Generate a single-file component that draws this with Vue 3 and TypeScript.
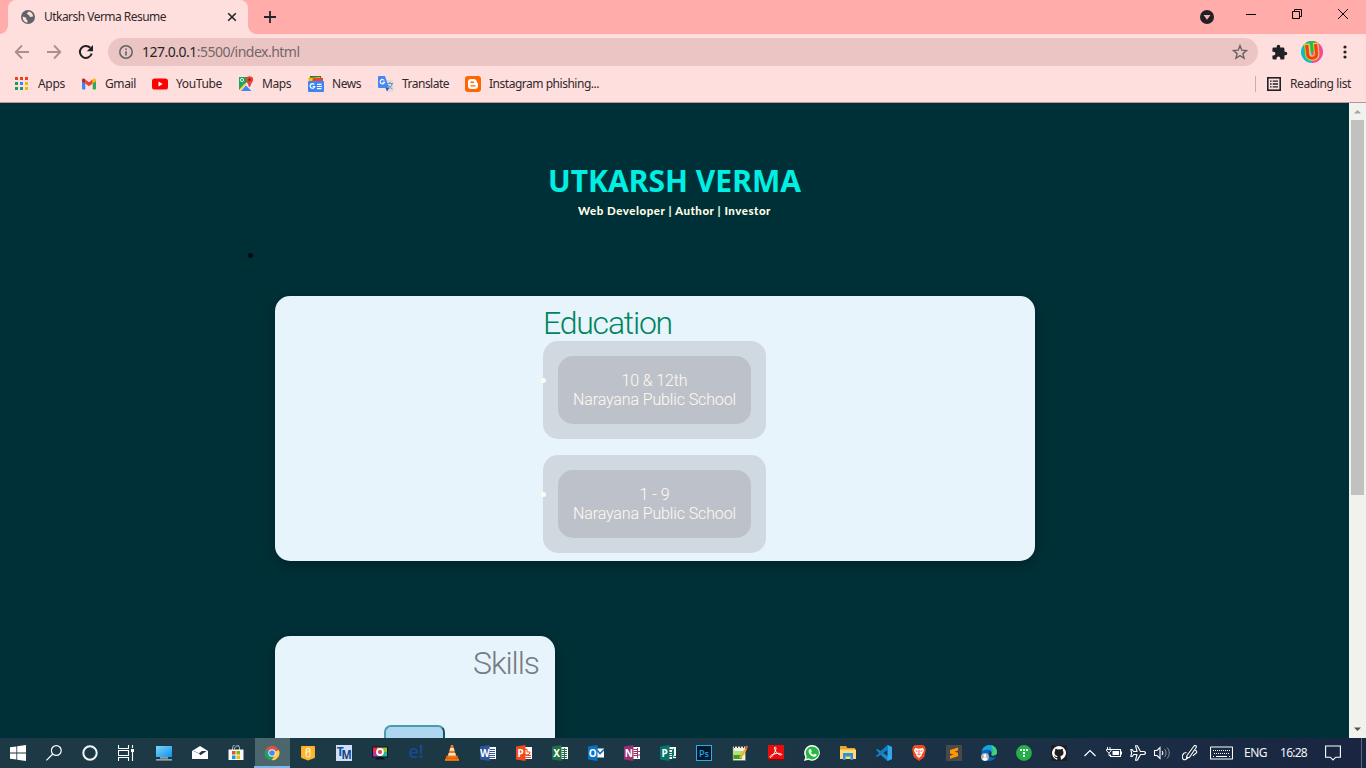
<script setup lang="ts">
interface Item { name: string; w?: number; svg: string }

/* Spreads letter spacing so that a label takes a given width. */
const vFit = {
  mounted(el: HTMLElement, binding: { value: number }) {
    const range = document.createRange()
    range.selectNodeContents(el)
    const natural = range.getBoundingClientRect().width
    const count = (el.textContent || '').length
    el.style.letterSpacing = (binding.value - natural) / count + 'px'
  },
}

const bookmarks: Item[] = [
  { name: 'Apps', w: 27, svg: '<g transform="translate(2 1)"><path fill="#ea4318" d="M0 0h3v3H0zM5 0h3v3H5zM10 0h3v3h-3z"/><path fill="#12a05c" d="M0 5h3v3H0zM0 10h3v3H0z"/><path fill="#2f86f6" d="M5 5h3v3H5z"/><path fill="#f5b400" d="M10 5h3v3h-3zM10 10h3v3h-3z"/><path fill="#12a05c" d="M5 10h3v3H5z"/></g>' },
  { name: 'Gmail', w: 31, svg: '<path fill="#4285f4" d="M1 4.5l3.3 2.4v6.6H2a1 1 0 0 1-1-1z"/><path fill="#34a853" d="M11.7 6.9L15 4.5v8a1 1 0 0 1-1 1h-2.300z"/><path fill="#ea4335" d="M4.300 3.500L8 6.300l3.700-2.800v4L8 10.300 4.300 7.500z"/><path fill="#c5221f" d="M1 4c0-1.500 1.500-2 2.500-1.200l.8.7v4L1 5.200z"/><path fill="#fbbc04" d="M15 4c0-1.500-1.500-2-2.500-1.200l-.8.7v4L15 5.200z"/>' },
  { name: 'YouTube', w: 46, svg: '<rect x="0" y="2.500" width="16" height="11" rx="2.600" fill="#f00"/><path fill="#fff" d="M6.500 5.500v5L10.700 8z"/>' },
  { name: 'Maps', w: 29, svg: '<path fill="#1da462" d="M1 1h10v5L2 14H1z"/><path fill="#e8eaed" d="M2 13l8-8 5 4v5h-2L8 9l-5 5.500z"/><path fill="#4285f4" d="M8 9.500l5.500 5.500H3z"/><path fill="#fbcd34" d="M6.500 7.500l1.500 1.500-5.500 5.500L1 14z"/><circle cx="4" cy="4" r="1.600" fill="none" stroke="#dff3e5"/><path fill="#ea4335" d="M11.500.2c4.500 0 4.500 4.500 2 7L12 11h-1L9.600 7.200C7 4.500 7.500.2 11.500.2z"/><circle cx="11.500" cy="3.800" r="1.300" fill="#8a2018"/>' },
  { name: 'News', w: 29, svg: '<path fill="#188038" d="M2 0h11l1 6H1z"/><path fill="#fbbc04" d="M0 2l12-1 2 5H1z"/><path fill="#ea4335" d="M5 2l10 0v4H4z"/><rect y="5" width="16" height="11" rx="1" fill="#3f84f5"/><path d="M6.300 8.600A2.300 2.300 0 1 0 6.700 10.500H4.600M9 8.300h4.500M9 10.500h5M9 12.700h4.500" fill="none" stroke="#fff" stroke-width="1.200"/>' },
  { name: 'Translate', w: 47, svg: '<path fill="#d9dde0" d="M6 4h9.500v11.800H9z"/><path d="M9.500 7.500h5.500M12 6v1.500M14 8c-.5 2.500-2 4-4 5M10.500 9c1 2 2 3 4 4" stroke="#7b9198" fill="none"/><path fill="#4a86f0" d="M1 0h6l4 12H1a1 1 0 0 1-1-1V1a1 1 0 0 1 1-1z"/><path fill="#3551c1" d="M7.500 12H11l-2 3.500z"/><path d="M6.300 4.500A2.200 2.200 0 1 0 6.500 6.300H4.500" fill="none" stroke="#fff" stroke-width="1.100"/>' },
  { name: 'Instagram phishing...', w: 110, svg: '<rect width="16" height="16" rx="3" fill="#ff6600"/><path fill="#fff" d="M6 3h2.500C10.500 3 12 4.500 12 6.500c.2.700 1 .3 1 1.200V10a3 3 0 0 1-3 3H6a3 3 0 0 1-3-3V6a3 3 0 0 1 3-3z"/><path d="M6 6.300h2.500M6 9.900h4" stroke="#ff6600" stroke-width="1.400" stroke-linecap="round"/>' },
]

const office = (color: string, letter: string, page: string) =>
  `<path fill="#fff" d="M8 2h8v12H8z"/>${page}<path fill="${color}" d="M0 1.600L9.500 0v16L0 14.400z"/><text x="4.700" y="11.600" text-anchor="middle" font-size="10" font-weight="700" font-family="Noto Sans" fill="#fff">${letter}</text>`

const shell: Item[] = [
  { name: 'start', svg: '<path fill="#fff" d="M0 2.300L6.400 1.400v6.200H0zM7.200 1.300L16 0v7.600H7.200zM0 8.400h6.400v6.200L0 13.700zM7.200 8.400H16V16l-8.800-1.300z"/>' },
  { name: 'search', svg: '<g fill="none" stroke="#fff" stroke-width="1.200"><circle cx="10.300" cy="5.500" r="4.900"/><path d="M6.800 9L.4 15.400"/></g>' },
  { name: 'cortana', svg: '<circle cx="8" cy="8" r="6.700" fill="none" stroke="#f4f6f6" stroke-width="2"/>' },
  { name: 'task view', svg: '<path d="M.5 0v3.500h10V0M.5 16v-3.500h10V16M.5 5.500h10v5H.5zM14.500 0v3M14.500 7v9" fill="none" stroke="#fff" stroke-width="1.100"/><path fill="#fff" d="M13 4h3v3h-3z"/>' },
]

const apps: Item[] = [
  { name: 'this pc', svg: '<defs><linearGradient id="pc" x2="1" y2="1"><stop stop-color="#7bd4ff"/><stop offset="1" stop-color="#1291e6"/></linearGradient></defs><rect x="0" y="1" width="16" height="11" fill="url(#pc)"/><path stroke="#b9c4c9" d="M4 12.800h8M0 14.800h16" stroke-width="1.200"/>' },
  { name: 'mail', svg: '<path fill="#fff" d="M0 6l8-5 8 5v8H0z"/><path fill="#1c3744" d="M1.500 6h13L8.500 10.300 7 8.500z"/><path fill="#fff" d="M1 5.500h9.500L7 8.300z"/>' },
  { name: 'store', svg: '<path d="M4.500 5V3a3.500 3.500 0 0 1 7 0v2M6.500 4.500V3a3.500 3.500 0 0 1 4-2" fill="none" stroke="#a7b3b8"/><path fill="#f8f8f8" d="M.5 4.500h15V15H.5z"/><path fill="#f25022" d="M4 6h3.500v3.500H4z"/><path fill="#7fba00" d="M8.500 6H12v3.500H8.500z"/><path fill="#00a4ef" d="M4 10.500h3.500V14H4z"/><path fill="#ffb900" d="M8.500 10.500H12V14H8.500z"/>' },
  { name: 'chrome', svg: '<circle cx="8" cy="8" r="7.200" fill="#dd5144"/><path fill="#ffcd46" d="M8 8l6.800-3A7.200 7.200 0 0 1 7.500 15.200L11 9z"/><path fill="#1ca261" d="M8 8L1.700 4.400A7.200 7.200 0 0 0 7.400 15.200L11 10z"/><circle cx="8" cy="8" r="3.700" fill="#f1f3f4"/><circle cx="8" cy="8" r="2.800" fill="#4688f4"/>' },
  { name: 'gold', svg: '<rect x="1" y="1" width="14" height="12" rx="1" fill="#f59c12"/><path fill="#ffb52b" d="M1.500 1h13v12L8 15.500 1.500 13z"/><path d="M9.800 4.700L6.200 8.300V5A1.500 1.500 0 0 1 8 3.500h.5A1.600 1.600 0 0 1 10 5v5a2 2 0 0 1-4 0V8.300" fill="none" stroke="#fff1c8" stroke-width="1.200"/>' },
  { name: 'tm', svg: '<rect width="16" height="16" fill="#cfe0fa"/><text x=".8" y="11" font-size="12" font-weight="700" font-family="Noto Sans" fill="#0d5597" textLength="7" lengthAdjust="spacingAndGlyphs">T</text><text x="5.500" y="13.500" font-size="11.500" font-weight="700" font-family="Noto Sans" fill="#173f85" textLength="10.200" lengthAdjust="spacingAndGlyphs">M</text>' },
  { name: 'recorder', svg: '<path fill="#101418" d="M0 1.500h16v11h-5l2 2H3l2-2H0z"/><path fill="#e52b54" d="M1 2.500h5V7H1z"/><path fill="#ea8b20" d="M5 2.500h4V7H5z"/><path fill="#8bc33b" d="M9 2.500h6V7H9z"/><path fill="#b136a5" d="M1 7h5v4.500H1z"/><path fill="#3273cf" d="M5 7h5v4.500H5z"/><path fill="#21b59a" d="M10 7h5v4.500h-5z"/><circle cx="8" cy="7" r="3.900" fill="#fff"/><circle cx="8" cy="7" r="2.100" fill="#e63f4a"/>' },
  { name: 'e', svg: '<text x=".5" y="13" font-size="18" font-family="Noto Sans" font-weight="500" fill="#154c97" textLength="15" lengthAdjust="spacingAndGlyphs">e!</text>' },
  { name: 'vlc', svg: '<path fill="#e85e00" d="M2.500 10.500h11L15 15.500H1z"/><path fill="#f47b0c" d="M7 0h2l3.500 12.500h-9z"/><path fill="#f4e9df" d="M6.300 3h3.400l.8 2.700h-5zM4.800 8h6.400l.7 2.500H4.100z"/><path fill="#f47b0c" d="M1 14h14v1.800H1z"/>' },
  { name: 'word', svg: office('#2b579a', 'W', '<path stroke="#2b579a" d="M9 4.500h6M9 6.500h6M9 8.500h6M9 10.500h6M9 12.500h6"/>') },
  { name: 'powerpoint', svg: office('#f24a20', 'P', '<path fill="none" stroke="#f24a20" d="M9.500 10.500H15M9.500 12.500H15M11 4v3h3a3 3 0 1 1-3-3"/>') },
  { name: 'excel', svg: office('#1e7145', 'X', '<path stroke="#1e7145" d="M9.500 4.500H15M9.500 6.500H15M9.500 8.500H15M9.500 10.500H15M9.500 12.500H15M12.500 3v11"/>') },
  { name: 'outlook', svg: '<path fill="#fff" d="M8 3.500h8v9H8z"/><path d="M9 5l3 3.500L16 4.500" stroke="#0872c6" stroke-width="1.600" fill="none"/><path fill="#0872c6" d="M0 1.600L9.500 0v16L0 14.400z"/><text x="4.700" y="11.600" text-anchor="middle" font-size="10" font-weight="700" font-family="Noto Sans" fill="#fff">O</text>' },
  { name: 'onenote', svg: office('#9b3070', 'N', '<path fill="none" stroke="#9b3070" d="M9.500 4.500H13M9.500 6.500H13M9.500 8.500H13M9.500 10.500H13M13.500 3v10M14 6.500h2M14 10h2"/>') },
  { name: 'publisher', svg: office('#077568', 'P', '<path fill="none" stroke="#077568" d="M9 4.500h3.500V14M13.500 3.500v7M9 7.500h3M9 9.500h3M9 11.500h3M13.500 11.500H16M13 13.500h3"/>') },
  { name: 'photoshop', svg: '<rect x=".5" y=".5" width="15" height="15" fill="#06182c" stroke="#27afec"/><text x="3" y="11.500" font-size="9.500" font-family="Noto Sans" font-weight="500" fill="#25a9ea" textLength="10" lengthAdjust="spacingAndGlyphs">Ps</text>' },
  { name: 'notepad', svg: '<path fill="#eef2e7" stroke="#6f786b" stroke-width=".7" d="M1 1.500h12.500v14H1z"/><path fill="#b5e06b" d="M1.500 6h11v4l-10 3z"/><path fill="#3f9e23" d="M1.500 10h9l-1 4h-8z"/><path stroke="#303b35" d="M2.500 0v3M5.500 0v3M8.500 0v3M11.500 0v3"/><path d="M8 13l6.300-9.500" stroke="#f0b11e" stroke-width="2.200"/><path d="M13.700 4L15.300 1" stroke="#e55734" stroke-width="2.200"/>' },
  { name: 'acrobat', svg: '<rect width="16" height="15" fill="#e90c0c"/><path fill="#850909" d="M0 14h16v1.500H0z"/><path fill="none" stroke="#fff" stroke-width="1" d="M7 2c2 0 1 5-3.800 10.200-1.200.8-2.200-.5.500-2.200C8 7.700 13.700 8 13.700 9.500 13.500 11.500 6.500 8 6.500 2.600 6.500 2 7 2 7 2"/>' },
  { name: 'whatsapp', svg: '<path fill="#fff" d="M8.200 0A7.800 7.800 0 1 1 4.400 14.700L0 16l1.300-4.100A7.900 7.900 0 0 1 8.200 0z"/><path fill="#25b943" d="M8.200 1.400a6.500 6.500 0 1 1-3.600 11.800L2 14l.8-2.500A6.500 6.500 0 0 1 8.200 1.400z"/><path fill="#fff" d="M5.500 4.300L6.800 4l1 2.300-.9 1.200c.7 1.200 1.500 1.900 2.700 2.300l1.100-1.100 2 1.100c0 1.300-1.300 2-2.500 1.900C6.800 11 4.500 8.200 4.600 6.200c0-.8.3-1.500.9-1.900z"/>' },
  { name: 'explorer', svg: '<path fill="#e9a626" d="M0 1h6l1.500 2H15v3H0z"/><path fill="#ffda70" d="M0 4.500h16V14H0z"/><path fill="#2c93dc" d="M3 8h10v7h-2.500v-3.500h-5V15H3z"/>' },
]

const appsNarrow: Item[] = [
  { name: 'vscode', svg: '<path fill="#168bd2" d="M11.500 0L16 2v12l-4.500 2-7-6.300L1.500 12 0 11.200 3.200 8 0 4.800 1.500 4l3 2.300zM12 4.500L7.200 8l4.800 3.500z"/><path fill="#30a7ef" d="M11.500 0L16 2v12l-4.500 2z"/><path fill="#0877b6" d="M0 11.200L12 0v4.500L1.500 12z" opacity=".6"/>' },
  { name: 'brave', svg: '<path fill="#f4481e" d="M4 0h8l2 1.500.8 3L13.300 12 8 16l-5.300-4L1.200 4.500l.8-3z"/><path fill="#fff" d="M4 3l4 .8L12 3l1 2.500-1.500 3-1 .8.5 1L8 13l-3-2.700.5-1-1-.8L3 5.500z"/><path stroke="#f4481e" stroke-width=".9" fill="none" d="M4.500 5.700l2 .7M11.500 5.700l-2 .7M8 5v4M6.300 9l1.700 1.100L9.700 9"/>' },
  { name: 'sublime', svg: '<rect width="16" height="16" fill="#48494a"/><path fill="#ff9800" d="M4 5l8-2.500v3L8.500 6.700 12 7.800v3.400L4 13.800v-3l3.500-1.200L4 8.400z"/>' },
  { name: 'edge', svg: '<path fill="#12a5e0" d="M.5 7C1.500 2 5 0 8.500 0 13 0 16 3.500 16 7.200c0 3-3.300 4-5.700 2.700.8-1.500.5-4.500-3-5C4 4.500 1.500 6 .5 7z"/><path fill="#40d07a" d="M10 .2c4 .5 6 4 6 7 0 3-3.500 4-5.700 2.700L12 5z"/><path fill="#0867bd" d="M.5 7.500c2-4 8-3.500 8.500 0-2.500 1-1.500 5 2.500 5 1.500 0 2.700-.4 3.500-1-1.500 3.500-5 4.800-8.200 4.400C2.500 15.300 0 11.500.5 7.500z"/><circle cx="4" cy="12" r="4" fill="#aeb4b8"/><circle cx="4" cy="10.700" r="1.400" fill="#fff"/><path fill="#fff" d="M1.500 14.500c0-3 5-3 5 0L4 16z"/>' },
  { name: 'green', svg: '<circle cx="8" cy="8" r="7.900" fill="#25af49"/><path fill="#fff" d="M4 4h2v2H4zM7 4h2v2H7zM10 4h2v2h-2zM7 7h2v2H7zM7 10h2v2H7z"/>' },
  { name: 'github', svg: '<rect width="16" height="16" fill="#201d21"/><path fill="#fff" fill-rule="evenodd" d="M8 1a7 7 0 0 0-2.200 13.650c.35.060.48-.15.480-.340v-1.200c-1.950.420-2.360-.940-2.360-.940-.320-.810-.780-1.030-.780-1.030-.640-.440.050-.430.050-.430.700.050 1.070.720 1.070.720.620 1.070 1.640.760 2.040.580.060-.450.240-.760.440-.930-1.550-.180-3.190-.780-3.190-3.460 0-.770.270-1.390.720-1.880-.070-.180-.310-.890.070-1.850 0 0 .590-.190 1.930.720a6.700 6.700 0 0 1 3.510 0c1.340-.910 1.930-.720 1.930-.720.380.960.140 1.670.070 1.850.450.490.720 1.110.720 1.880 0 2.690-1.640 3.280-3.200 3.450.250.220.480.650.480 1.300v1.930c0 .190.130.410.480.340A7 7 0 0 0 8 1z"/>' },
]
</script>

<template>
  <div class="screen">
    <header class="tabs">
      <div class="tab">
        <svg class="globe" viewBox="0 0 16 16"><circle cx="8" cy="8" r="7" fill="#5f6368" /><path fill="#ffdfde" d="M2.700 7.600c1.500.9 3 .4 3.500 1.600.3 1-.1 1.700 1.200 1.900v2.600C4.500 13.500 2.300 11 2.700 7.600zM8.500 2.500c-.2 1.300-1.700 1-1.700 2.300 0 1.100 1.200.8 2 1.300.9.600.5 1.800 1.700 1.900 1 .1 1.300-.9 2.700-.4C13 4.800 11 2.700 8.500 2.500z" /></svg>
        <span v-fit="122" class="ui">Utkarsh Verma Resume</span>
        <svg class="close" viewBox="0 0 10 10"><path d="M1.200 1.200l7.600 7.600M8.800 1.200L1.200 8.800" stroke="#222529" stroke-width="1.600" /></svg>
      </div>
      <svg class="plus" viewBox="0 0 12 12"><path d="M6 0v12M0 6h12" stroke="#222529" stroke-width="1.800" /></svg>
      <div class="window-controls">
        <svg class="drop" viewBox="0 0 14 14"><circle cx="7" cy="7" r="7" fill="#202124" /><path fill="#ffacab" d="M3.500 5h7L7 9.800z" /></svg>
        <svg viewBox="0 0 10 10"><path d="M0 5.500h10" stroke="#000" /></svg>
        <svg viewBox="0 0 10 10"><path d="M.5 2.500h7v7h-7zM2.500 2.500v-2h7v7h-2" stroke="#000" fill="none" /></svg>
        <svg viewBox="0 0 10 10"><path d="M0 0l10 10M10 0L0 10" stroke="#000" /></svg>
      </div>
    </header>

    <div class="toolbar">
      <svg class="nav" viewBox="0 0 16 16"><path d="M15 8H2M8 1.500L1.700 8 8 14.500" fill="none" stroke="#a98f91" stroke-width="1.800" /></svg>
      <svg class="nav" viewBox="0 0 16 16"><path d="M1 8h13M8 1.500L14.300 8 8 14.500" fill="none" stroke="#a98f91" stroke-width="1.800" /></svg>
      <svg class="nav" viewBox="0 0 16 16"><path d="M13.700 9.500A6 6 0 1 1 12.300 3.800" fill="none" stroke="#202124" stroke-width="2" /><path fill="#202124" d="M15 1v6.200H8.800z" /></svg>
      <div class="address">
        <svg viewBox="0 0 14 14"><circle cx="7" cy="7" r="6.200" fill="none" stroke="#5f6368" stroke-width="1.500" /><path stroke="#5f6368" stroke-width="1.600" d="M7 6.200v4.300M7 3.500v1.500" /></svg>
        <span v-fit="157.500" class="url">127.0.0.1<i>:5500/index.html</i></span>
        <svg class="star" viewBox="0 0 16 16"><path d="M8 1.700l1.800 4.500 4.800.3-3.700 3.100 1.200 4.700L8 11.700l-4.100 2.600 1.200-4.700L1.400 6.500l4.800-.3z" fill="none" stroke="#6a6164" stroke-width="1.400" /></svg>
      </div>
      <svg class="puzzle" viewBox="0 0 24 24"><path fill="#202124" d="M20.500 11H19V7a2 2 0 0 0-2-2h-4V3.500a2.500 2.500 0 0 0-5 0V5H4a2 2 0 0 0-2 2v3.800h1.500a2.700 2.700 0 0 1 0 5.400H2V20a2 2 0 0 0 2 2h3.800v-1.500a2.700 2.700 0 0 1 5.400 0V22H17a2 2 0 0 0 2-2v-4h1.500a2.500 2.500 0 0 0 0-5z" /></svg>
      <svg class="avatar" viewBox="0 0 22 22">
        <defs><clipPath id="disc"><circle cx="11" cy="11" r="11" /></clipPath></defs>
        <g clip-path="url(#disc)"><path fill="#05bfd0" d="M0 0h11v22H0z" /><path fill="#f3489c" d="M11 0h11v22H11z" /><path fill="#21b764" d="M5 0h10l2 11H7z" /></g>
        <g transform="rotate(-6 11 11)" class="initial" text-anchor="middle" font-size="20"><text x="11" y="18" fill="#ead52a" stroke="#ead52a" stroke-width="3">U</text><text x="11" y="18" fill="#ef3d22" stroke="#ef3d22" stroke-width=".6" aria-hidden="true">U</text></g>
      </svg>
      <svg class="dots" viewBox="0 0 4 14"><g fill="#202124"><circle cx="2" cy="2" r="1.600" /><circle cx="2" cy="7" r="1.600" /><circle cx="2" cy="12" r="1.600" /></g></svg>
    </div>

    <nav class="bookmarks">
      <a v-for="b in bookmarks" :key="b.name" class="bookmark">
        <svg viewBox="0 0 16 16" v-html="b.svg"></svg><span v-fit="b.w!" class="ui" :style="{ width: b.w + 'px' }">{{ b.name }}</span>
      </a>
      <div class="reading">
        <svg viewBox="0 0 14 14"><rect x=".8" y=".8" width="12.400" height="12.400" fill="none" stroke="#202124" stroke-width="1.600" /><path stroke="#202124" stroke-width="1.300" d="M3 4.200h1.600M5.700 4.200H11M3 7h1.600M5.700 7H11M3 9.800h1.600M5.700 9.800H11" /></svg>
        <span v-fit="61" class="ui">Reading list</span>
      </div>
    </nav>

    <main class="viewport">
      <div class="page">
        <h1><span v-fit="253">UTKARSH VERMA</span></h1>
        <p class="roles"><span v-fit="193">Web Developer | Author | Investor</span></p>
        <div class="bullet"></div>
        <section class="card education">
          <div class="stack">
            <h2><span v-fit="129">Education</span></h2>
            <div class="entry"><div class="inner"><span v-fit="66">10 &amp; 12th</span><span v-fit="163">Narayana Public School</span></div></div>
            <div class="entry"><div class="inner"><span v-fit="30">1 - 9</span><span v-fit="163">Narayana Public School</span></div></div>
          </div>
        </section>
        <section class="card skills">
          <h2><span v-fit="66">Skills</span></h2>
          <div class="chip"></div>
        </section>
      </div>
      <div class="scrollbar">
        <svg viewBox="0 0 17 17"><path fill="#a3a3a3" d="M5 10.500h7L8.500 7z" /></svg>
        <div class="thumb"></div>
        <svg class="down" viewBox="0 0 17 17"><path fill="#505050" d="M5 6.500h7L8.500 10z" /></svg>
      </div>
    </main>

    <footer class="taskbar">
      <div v-for="s in shell" :key="s.name" class="cell"><svg viewBox="0 0 16 16" v-html="s.svg"></svg></div>
      <div class="gap"></div>
      <div v-for="s in apps" :key="s.name" class="cell" :class="{ active: s.name === 'chrome' }"><svg viewBox="0 0 16 16" v-html="s.svg"></svg></div>
      <div v-for="s in appsNarrow" :key="s.name" class="cell narrow"><svg viewBox="0 0 16 16" v-html="s.svg"></svg></div>
      <div class="tray">
        <svg class="chev" viewBox="0 0 12 8"><path d="M.5 7L6 1.500 11.500 7" fill="none" stroke="#fff" stroke-width="1.200" /></svg>
        <svg class="t16" viewBox="0 0 16 16"><path d="M5 4.500h9.500v7H4.500v-2M15.500 6.500v3" fill="none" stroke="#fff" stroke-width="1.100" /><path fill="#fff" d="M6.500 6H13v4H6.500z" /><path d="M1.500 2v2M4 2v2M.5 4.500h4.500v1.300L3.500 7.500h-1L.5 5.800zM3 7.500v3h2" fill="none" stroke="#fff" /></svg>
        <svg class="t16" viewBox="0 0 16 16"><path fill="none" stroke="#fff" stroke-width="1.100" stroke-linejoin="round" d="M5.500.7h1.800L10.500 6.500h3.500c2 .5 2 2.500 0 3h-3.500L7.300 15.300H5.500L7 9.500H3.700L2.200 11.500H.8L1.700 8 .8 4.500h1.400l1.500 2H7z" /></svg>
        <svg class="t16" viewBox="0 0 16 16"><path fill="none" stroke="#fff" stroke-width="1.100" d="M.5 5.500H3l3-3v11l-3-3H.5zM8 6c1 1.200 1 2.800 0 4" /><path fill="none" stroke="#8993a1" d="M10.500 4c2 2.400 2 5.600 0 8M13 2.500c3 3.200 3 7.800 0 11" /></svg>
        <svg class="pen" viewBox="0 0 16 16"><path fill="none" stroke="#fff" stroke-width="1.100" d="M5 10.500l7-9.500c1.300-1.200 3 0 2 1.700L7.500 12.300l-3 1zM4.500 7.500C.5 7.500-.5 12 1 14c2 2 4.500-.5 5-2M11.500 5.500c3-1 4 1.500 2.500 2.700-1.200 1-2.500 1.500-3 2.800" /></svg>
        <svg class="keyboard" viewBox="0 0 23 14"><rect x=".5" y="1" width="22" height="12" rx=".5" fill="none" stroke="#fff" stroke-width="1.100" /><path stroke="#fff" stroke-dasharray="1 1" d="M3 4.500h17M4 7.500h16" /><path stroke="#fff" d="M3 10.500h1M6 10.500h11M19 10.500h1" /></svg>
        <span v-fit="23" class="eng">ENG</span>
        <span v-fit="27" class="clock">16:28</span>
        <svg class="notice" viewBox="0 0 16 16"><path d="M.6 1h14.800v11.200h-4.700L8 15l-2.700-2.800H.6z" fill="none" stroke="#fff" stroke-width="1.100" /></svg>
        <div class="edge"></div>
      </div>
    </footer>
  </div>
</template>

<style>
html, body { margin: 0; overflow: hidden; }
</style>

<style scoped>
* { box-sizing: border-box; }
.screen { width: 1366px; height: 768px; display: flex; flex-direction: column; overflow: hidden; font-family: "Noto Sans", sans-serif; }
svg { display: block; flex: none; }
span { white-space: nowrap; }
.ui { font-size: 12px; line-height: 16px; color: #30282b; display: block; }

.tabs { height: 34px; background: #ffacab; display: flex; position: relative; padding-left: 8px; flex: none; }
.tab { width: 240px; height: 34px; background: #ffdfde; border-radius: 8px 8px 0 0; display: flex; align-items: center; padding-left: 12px; position: relative; }
.tab::before, .tab::after { content: ""; position: absolute; bottom: 0; width: 8px; height: 8px; }
.tab::before { left: -8px; background: radial-gradient(circle at 0 0, #ffacab 7.500px, #ffdfde 8px); }
.tab::after { right: -8px; background: radial-gradient(circle at 100% 0, #ffacab 7.500px, #ffdfde 8px); }
.globe { width: 16px; height: 16px; margin-right: 8px; }
.tab .ui { width: 182px; }
.close { width: 10px; height: 10px; margin-left: 1px; }
.plus { width: 12px; height: 12px; margin: 11px 0 0 16px; }
.window-controls { margin-left: auto; display: flex; padding: 9px 18px 0 0; }
.window-controls svg { width: 10px; height: 10px; margin-left: 36px; }
.window-controls .drop { width: 14px; height: 14px; margin: 1px -4px 0 0; }

.toolbar { height: 36px; background: #ffdfde; display: flex; align-items: center; padding-left: 14px; flex: none; }
.nav { width: 16px; height: 16px; margin-right: 16px; }
.nav:nth-child(3) { margin-right: 14px; }
.address { width: 1150px; height: 28px; border-radius: 14px; background: #ebc5c4; display: flex; align-items: center; padding: 0 10px 0 11px; }
.address > svg { width: 14px; height: 14px; }
.address > .star { width: 16px; height: 16px; margin-left: auto; }
.url { font-size: 14px; line-height: 20px; color: #2c2427; margin-left: 9px; }
.url i { font-style: normal; color: #75666a; }
.puzzle { width: 17px; height: 17px; margin-left: 13px; }
.avatar { width: 22px; height: 22px; margin-left: 13px; overflow: visible; }
.initial { font-family: "Noto Sans", sans-serif; font-weight: 600; }
.dots { width: 4px; height: 14px; margin-left: 20px; }

.bookmarks { height: 33px; background: #ffdfde; border-bottom: 1px solid #b9989b; display: flex; padding: 6px 14px 0 13px; flex: none; }
.bookmark { display: flex; height: 16px; margin-right: 16px; }
.bookmark:nth-child(4), .bookmark:nth-child(5) { margin-right: 17px; }
.bookmark svg { width: 16px; height: 16px; margin-right: 8px; }
.bookmark:first-child svg { margin-right: 9px; }
.reading { margin-left: auto; height: 16px; border-left: 1px solid #d0a9ab; display: flex; align-items: center; padding-left: 11px; }
.reading svg { width: 14px; height: 14px; margin-right: 9px; }
.reading .ui { width: 62px; }

.viewport { height: 635px; display: flex; background: #003037; overflow: hidden; flex: none; }
.page { width: 1349px; height: 635px; overflow: hidden; padding-top: 57px; }
h1 { margin: 0; font: 700 30px/42px "Noto Sans", sans-serif; color: #00efe2; text-align: center; }
.roles { margin: 1px 0 0; font: 900 11.500px/16px Lato, sans-serif; color: #fffce4; text-align: center; }
.bullet { width: 5px; height: 5px; border-radius: 50%; background: #000b10; margin: 34px 0 38px 248px; }
.card { margin-left: 275px; background: #e7f4fb; border-radius: 15px; box-shadow: 0 4px 14px rgba(0, 0, 0, .25); }
.education { width: 760px; height: 265px; padding: 8px 0 0 268px; }
.stack { width: 223px; }
h2 { margin: 0 0 -2px; font: 300 32px/39px Roboto, sans-serif; color: #00845f; }
.entry { position: relative; height: 98px; border-radius: 15px; background: #d1d9e0; padding: 15px; margin-bottom: 16px; }
.entry::before { content: ""; position: absolute; left: -2px; top: 37px; width: 5px; height: 5px; border-radius: 50%; background: #fffaf0; }
.inner { height: 68px; border-radius: 15px; background: #bdc2ca; display: flex; flex-direction: column; align-items: center; padding-top: 15px; font: 300 16px/19px Roboto, sans-serif; color: #fffaf0; }
.skills { width: 280px; height: 300px; margin-top: 75px; padding-top: 8px; }
.skills h2 { color: #777b82; text-align: right; padding-right: 16px; }
.chip { position: relative; width: 61px; height: 60px; margin: 44px 0 0 109px; border: 2px solid; border-color: #469dac #195560 #195560 #469dac; border-radius: 7px; background: #aed6f0; }

.scrollbar { width: 17px; height: 635px; background: #f1f1ee; display: flex; flex-direction: column; align-items: center; }
.scrollbar svg { width: 17px; height: 17px; }
.thumb { width: 13px; height: 375px; background: #c1c1c0; }
.scrollbar .down { margin-top: auto; }

.taskbar { height: 30px; background: linear-gradient(90deg, #1c3945 0%, #1c3846 50%, #1b2f45 78%, #192541 100%); display: flex; flex: none; }
.cell { width: 36px; height: 30px; display: flex; align-items: center; justify-content: center; flex: none; }
.cell svg { width: 16px; height: 16px; }
.narrow { width: 35px; }
.gap { width: 2px; flex: none; }
.active { background: linear-gradient(90deg, #1c3945 1px, #4c666e 1px); box-shadow: inset 0 -2px #76b9ed; }
.tray { display: flex; align-items: center; flex: 1; padding-left: 8px; }
.chev { width: 12px; height: 8px; margin-right: 10px; }
.t16 { width: 16px; height: 16px; margin-right: 8px; }
.pen { width: 16px; height: 16px; margin: 0 12px 0 4px; }
.keyboard { width: 23px; height: 14px; margin-right: 11px; }
.eng, .clock { font-size: 12px; line-height: 16px; color: #f4f5f7; }
.eng { width: 23px; margin-right: 13px; }
.clock { width: 27px; }
.notice { width: 16px; height: 16px; margin-left: 18px; }
.edge { width: 1px; height: 30px; background: #59677a; margin: 0 4px 0 auto; }
</style>
